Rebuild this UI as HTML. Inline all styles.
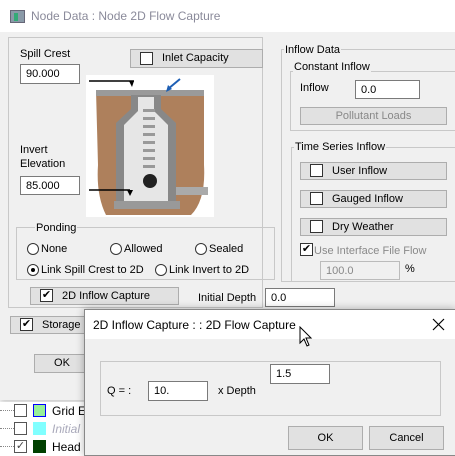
<!DOCTYPE html>
<html><head><style>
*{box-sizing:border-box}
body{margin:0;width:455px;height:455px;overflow:hidden;background:#fff;font-family:"Liberation Sans",sans-serif;font-size:11px;color:#000;position:relative}
.a{position:absolute}
.gb{position:absolute;border:1px solid #c8c8c8;}
.gl{position:absolute;background:#f0f0f0;padding:0 1px;line-height:13px}
.in{position:absolute;background:#fff;border:1px solid #7a7a7a;padding:2px 0 0 5px;line-height:14px}
.bt{position:absolute;background:#e1e1e1;border:1px solid #adadad;line-height:16px}
.cb{position:absolute;width:13px;height:13px;background:#fff;border:1px solid #333}
.rd{position:absolute;width:12px;height:12px;border-radius:50%;background:#fff;border:1px solid #333}
.t{position:absolute;white-space:nowrap;line-height:14px}
</style></head><body>
<div class="a" style="left:0;top:0;width:455px;height:400px;background:#f0f0f0;box-shadow:0 2px 6px rgba(0,0,0,.25)"></div>
<div class="a" style="left:0;top:0;width:455px;height:32px;background:#fff"></div>
<div class="a" style="left:10px;top:10px;width:15px;height:13px;background:#8a9aa8;border:1px solid #667"></div>
<div class="a" style="left:14px;top:13px;width:4px;height:8px;background:#3a7"></div>
<div class="t" style="left:31px;top:9px;font-size:12px;color:#8a8a9a">Node Data : Node 2D Flow Capture</div>

<div class="gb" style="left:8px;top:37px;width:255px;height:271px"></div>
<div class="t" style="left:20px;top:47px">Spill Crest</div>
<div class="in" style="left:20px;top:64px;width:60px;height:20px">90.000</div>
<div class="bt" style="left:130px;top:49px;width:133px;height:19px"></div>
<div class="cb" style="left:140px;top:52px"></div>
<div class="t" style="left:162px;top:51px">Inlet Capacity</div>
<svg class="a" style="left:86px;top:75px" width="128" height="142" viewBox="0 0 128 142">
<rect width="128" height="142" fill="#fff"/>
<path d="M10 15 H118 V90 Q120 125 105 140 H20 Q10 120 12 90Z" fill="#a06a40" opacity=".85"/>
<rect x="10" y="15" width="108" height="6" fill="#9a9a9a"/>
<path d="M45 20 V34 L30 48 V130 H90 V48 L75 34 V20Z" fill="#888"/>
<path d="M52 22 V36 L38 50 V126 H82 V50 L68 36 V22Z" fill="#e6e6e6"/>
<rect x="28" y="126" width="66" height="8" fill="#999"/>
<rect x="90" y="112" width="32" height="8" fill="#aaa"/>
<g fill="#999"><rect x="57" y="34" width="12" height="3"/><rect x="57" y="42" width="12" height="3"/><rect x="57" y="50" width="12" height="3"/><rect x="57" y="58" width="12" height="3"/><rect x="57" y="66" width="12" height="3"/><rect x="57" y="74" width="12" height="3"/><rect x="57" y="82" width="12" height="3"/><rect x="57" y="90" width="12" height="3"/></g>
<circle cx="64" cy="106" r="7" fill="#222"/>
<path d="M3 6 H48" stroke="#000" stroke-width="1.5"/><path d="M43 6 L48 6 L46 12Z" fill="#000"/>
<path d="M3 115 H44" stroke="#000" stroke-width="1.5"/><path d="M41 115 L47 115 L44 121Z" fill="#000"/>
<path d="M94 4 L82 14" stroke="#1e5fb4" stroke-width="2"/><path d="M80 17 L82 10 L86 14Z" fill="#1e5fb4"/>
</svg>
<div class="t" style="left:20px;top:143px">Invert</div>
<div class="t" style="left:20px;top:157px">Elevation</div>
<div class="in" style="left:20px;top:176px;width:60px;height:19px">85.000</div>

<div class="gb" style="left:16px;top:227px;width:259px;height:53px"></div>
<div class="gl" style="left:35px;top:222px">Ponding</div>
<div class="rd" style="left:27px;top:243px"></div><div class="t" style="left:41px;top:242px">None</div>
<div class="rd" style="left:110px;top:243px"></div><div class="t" style="left:124px;top:242px">Allowed</div>
<div class="rd" style="left:195px;top:243px"></div><div class="t" style="left:209px;top:242px">Sealed</div>
<div class="rd" style="left:27px;top:264px"></div><div class="a" style="left:31px;top:268px;width:4px;height:4px;border-radius:50%;background:#000"></div>
<div class="t" style="left:41px;top:263px">Link Spill Crest to 2D</div>
<div class="rd" style="left:155px;top:264px"></div><div class="t" style="left:169px;top:263px">Link Invert to 2D</div>

<div class="bt" style="left:30px;top:287px;width:149px;height:18px"></div>
<div class="cb" style="left:40px;top:289px;text-align:center;line-height:11px;font-size:11px">✔</div>
<div class="t" style="left:62px;top:289px">2D Inflow Capture</div>
<div class="t" style="left:198px;top:291px">Initial Depth</div>
<div class="in" style="left:265px;top:288px;width:70px;height:19px">0.0</div>

<div class="gb" style="left:281px;top:49px;width:175px;height:233px"></div>
<div class="gl" style="left:284px;top:44px">Inflow Data</div>
<div class="gb" style="left:290px;top:71px;width:166px;height:60px"></div>
<div class="gl" style="left:293px;top:61px">Constant Inflow</div>
<div class="t" style="left:300px;top:81px">Inflow</div>
<div class="in" style="left:355px;top:80px;width:65px;height:19px">0.0</div>
<div class="bt" style="left:300px;top:107px;width:147px;height:18px;color:#888;text-align:center">Pollutant Loads</div>
<div class="gb" style="left:291px;top:147px;width:165px;height:135px"></div>
<div class="gl" style="left:294px;top:141px">Time Series Inflow</div>
<div class="bt" style="left:300px;top:162px;width:147px;height:18px"></div><div class="cb" style="left:310px;top:164px"></div><div class="t" style="left:332px;top:164px">User Inflow</div>
<div class="bt" style="left:300px;top:190px;width:147px;height:18px"></div><div class="cb" style="left:310px;top:192px"></div><div class="t" style="left:332px;top:192px">Gauged Inflow</div>
<div class="bt" style="left:300px;top:218px;width:147px;height:18px"></div><div class="cb" style="left:310px;top:220px"></div><div class="t" style="left:332px;top:220px">Dry Weather</div>
<div class="cb" style="left:300px;top:243px;text-align:center;line-height:11px;font-size:11px">✔</div>
<div class="t" style="left:314px;top:244px;color:#8a8a8a">Use Interface File Flow</div>
<div class="in" style="left:320px;top:261px;width:80px;height:19px;background:#f0f0f0;border-color:#bbb;color:#888">100.0</div>
<div class="t" style="left:405px;top:262px">%</div>

<div class="bt" style="left:10px;top:316px;width:80px;height:18px"></div>
<div class="cb" style="left:20px;top:318px;text-align:center;line-height:11px;font-size:11px">✔</div>
<div class="t" style="left:42px;top:318px">Storage</div>
<div class="bt" style="left:34px;top:354px;width:56px;height:19px;text-align:center">OK</div>

<div class="a" style="left:0;top:402px;width:90px;height:53px;background:#fff"></div>
<div class="a" style="left:0;top:410px;width:14px;border-top:1px dotted #888"></div>
<div class="a" style="left:0;top:428px;width:14px;border-top:1px dotted #888"></div>
<div class="a" style="left:0;top:446px;width:14px;border-top:1px dotted #888"></div>
<div class="cb" style="left:14px;top:404px;border-color:#555"></div>
<div class="cb" style="left:14px;top:422px;border-color:#555"></div>
<div class="cb" style="left:14px;top:440px;border-color:#555;text-align:center;line-height:11px;font-size:11px;color:#444">✓</div>
<div class="a" style="left:33px;top:404px;width:13px;height:13px;background:#98f098;border:1px solid #00f"></div>
<div class="a" style="left:33px;top:422px;width:13px;height:13px;background:#80ffff"></div>
<div class="a" style="left:33px;top:440px;width:13px;height:13px;background:#004000"></div>
<div class="t" style="left:52px;top:404px;font-size:12px">Grid Ex</div>
<div class="t" style="left:52px;top:422px;color:#aab;font-style:italic;font-size:12px">Initial</div>
<div class="t" style="left:52px;top:440px;font-size:12px">Head E</div>

<div class="a" style="left:84px;top:309px;width:372px;height:147px;background:#f0f0f0;border:1px solid #888;box-shadow:0 0 8px rgba(0,0,0,.3)"></div>
<div class="a" style="left:85px;top:310px;width:370px;height:29px;background:#fff"></div>
<div class="t" style="left:93px;top:318px;font-size:12px">2D Inflow Capture : : 2D Flow Capture</div>
<svg class="a" style="left:432px;top:318px" width="13" height="13"><path d="M1 1L12 12M12 1L1 12" stroke="#000" stroke-width="1.2"/></svg>
<svg class="a" style="left:299px;top:326px" width="14" height="22"><path d="M1 1V17L5 13L8 20L10 19L7 12H12Z" fill="#fff" stroke="#000"/></svg>
<div class="gb" style="left:100px;top:361px;width:341px;height:55px"></div>
<div class="t" style="left:107px;top:384px">Q = :</div>
<div class="in" style="left:148px;top:381px;width:60px;height:20px">10.</div>
<div class="t" style="left:218px;top:384px">x Depth</div>
<div class="in" style="left:270px;top:364px;width:60px;height:20px">1.5</div>
<div class="bt" style="left:288px;top:426px;width:75px;height:24px;text-align:center;line-height:22px">OK</div>
<div class="bt" style="left:369px;top:426px;width:75px;height:24px;text-align:center;line-height:22px">Cancel</div>
</body></html>
